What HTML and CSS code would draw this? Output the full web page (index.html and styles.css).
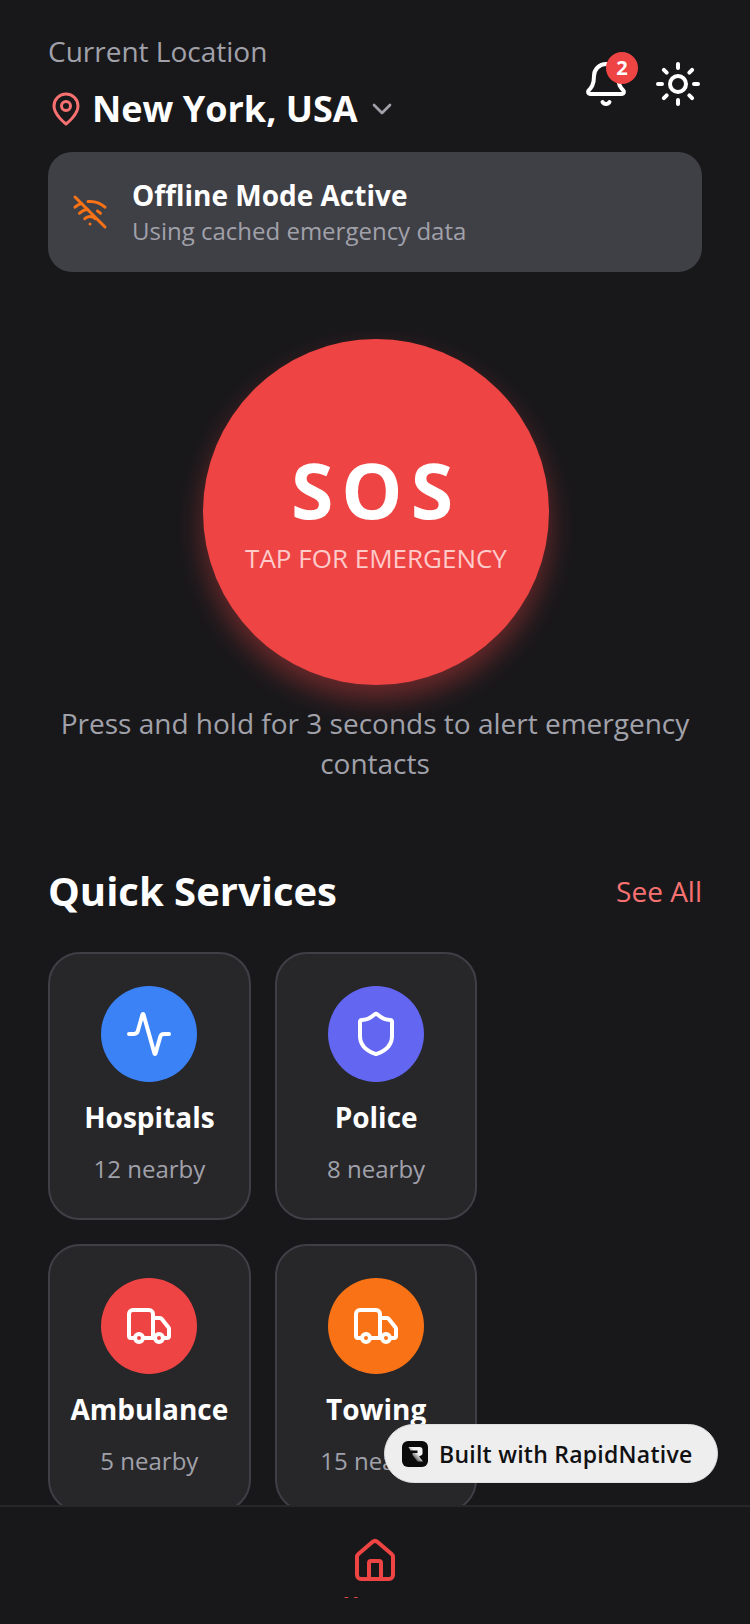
FILE: index.html
```html
<!DOCTYPE html>
<html lang="en">
<head>
  <meta charset="UTF-8">
  <meta name="viewport" content="width=device-width, initial-scale=1.0">
  <title>Emergency</title>
  <link rel="stylesheet" href="styles.css">
</head>
<body>
  <div id="app">
    <main class="content">
      <header class="top">
        <div>
          <div class="loc-label">Current Location</div>
          <div class="loc-row">
            <svg class="pin" viewBox="0 0 24 24"><path d="M20 10c0 6-8 12-8 12s-8-6-8-12a8 8 0 0 1 16 0Z"/><circle cx="12" cy="10" r="3"/></svg>
            <span class="loc-name">New York, USA</span>
            <svg class="chevron" viewBox="0 0 24 24"><path d="m6 9 6 6 6-6"/></svg>
          </div>
        </div>
        <div class="top-icons">
          <div class="bell">
            <svg class="icon48" viewBox="0 0 24 24"><path d="M10.268 21a2 2 0 0 0 3.464 0"/><path d="M3.262 15.326A1 1 0 0 0 4 17h16a1 1 0 0 0 .74-1.673C19.41 13.956 18 12.499 18 8A6 6 0 0 0 6 8c0 4.499-1.411 5.956-2.738 7.326"/></svg>
            <span class="badge">2</span>
          </div>
          <svg class="icon48" viewBox="0 0 24 24"><circle cx="12" cy="12" r="4"/><path d="M12 2v2"/><path d="M12 20v2"/><path d="m4.93 4.93 1.41 1.41"/><path d="m17.66 17.66 1.41 1.41"/><path d="M2 12h2"/><path d="M20 12h2"/><path d="m6.34 17.66-1.41 1.41"/><path d="m19.07 4.93-1.41 1.41"/></svg>
        </div>
      </header>

      <div class="offline">
        <svg class="wifi" viewBox="0 0 24 24"><path d="M12 20h.01"/><path d="M8.5 16.429a5 5 0 0 1 7 0"/><path d="M5 12.859a10 10 0 0 1 5.17-2.69"/><path d="M19 12.859a10 10 0 0 0-2.007-1.523"/><path d="M2 8.82a15 15 0 0 1 4.177-2.643"/><path d="M22 8.82a15 15 0 0 0-11.288-3.764"/><path d="m2 2 20 20"/></svg>
        <div>
          <div class="offline-title">Offline Mode Active</div>
          <div class="offline-sub">Using cached emergency data</div>
        </div>
      </div>

      <section class="sos-wrap">
        <button class="sos">
          <span class="sos-text">SOS</span>
          <span class="sos-sub">TAP FOR EMERGENCY</span>
        </button>
        <p class="sos-hint">Press and hold for 3 seconds to alert emergency contacts</p>
      </section>

      <div class="section-head">
        <h2>Quick Services</h2>
        <span class="see-all">See All</span>
      </div>

      <div class="services">
        <div class="card">
          <div class="circle blue">
            <svg class="icon48" viewBox="0 0 24 24"><path d="M22 12h-2.48a2 2 0 0 0-1.93 1.46l-2.35 8.36a.25.25 0 0 1-.48 0L9.24 2.18a.25.25 0 0 0-.48 0l-2.35 8.36A2 2 0 0 1 4.49 12H2"/></svg>
          </div>
          <div class="card-title">Hospitals</div>
          <div class="card-sub">12 nearby</div>
        </div>
        <div class="card">
          <div class="circle indigo">
            <svg class="icon48" viewBox="0 0 24 24"><path d="M20 13c0 5-3.5 7.5-7.66 8.95a1 1 0 0 1-.67-.01C7.5 20.5 4 18 4 13V6a1 1 0 0 1 1-1c2 0 4.5-1.2 6.24-2.72a1.17 1.17 0 0 1 1.52 0C14.51 3.81 17 5 19 5a1 1 0 0 1 1 1z"/></svg>
          </div>
          <div class="card-title">Police</div>
          <div class="card-sub">8 nearby</div>
        </div>
        <div class="card">
          <div class="circle red">
            <svg class="icon48" viewBox="0 0 24 24"><path d="M14 18V6a2 2 0 0 0-2-2H4a2 2 0 0 0-2 2v11a1 1 0 0 0 1 1h2"/><path d="M15 18H9"/><path d="M19 18h2a1 1 0 0 0 1-1v-3.65a1 1 0 0 0-.22-.624l-3.48-4.35A1 1 0 0 0 17.52 8H14"/><circle cx="17" cy="18" r="2"/><circle cx="7" cy="18" r="2"/></svg>
          </div>
          <div class="card-title">Ambulance</div>
          <div class="card-sub">5 nearby</div>
        </div>
        <div class="card">
          <div class="circle orange">
            <svg class="icon48" viewBox="0 0 24 24"><path d="M14 18V6a2 2 0 0 0-2-2H4a2 2 0 0 0-2 2v11a1 1 0 0 0 1 1h2"/><path d="M15 18H9"/><path d="M19 18h2a1 1 0 0 0 1-1v-3.65a1 1 0 0 0-.22-.624l-3.48-4.35A1 1 0 0 0 17.52 8H14"/><circle cx="17" cy="18" r="2"/><circle cx="7" cy="18" r="2"/></svg>
          </div>
          <div class="card-title">Towing</div>
          <div class="card-sub">15 nearby</div>
        </div>
      </div>
    </main>

    <nav class="tabbar">
      <svg class="home" viewBox="0 0 24 24"><path d="M15 21v-8a1 1 0 0 0-1-1h-4a1 1 0 0 0-1 1v8"/><path d="M3 10a2 2 0 0 1 .709-1.528l7-5.999a2 2 0 0 1 2.582 0l7 5.999A2 2 0 0 1 21 10v9a2 2 0 0 1-2 2H5a2 2 0 0 1-2-2z"/></svg>
      <div class="tab-clip"><span class="tab-label">Home</span></div>
    </nav>

    <div class="built">
      <svg class="built-logo" viewBox="0 0 26 26">
        <defs>
          <linearGradient id="logoFade" x1="0" y1="1" x2="1" y2="0">
            <stop offset="0.15" stop-color="#0b0b0c"/>
            <stop offset="0.6" stop-color="#f4f4f5"/>
          </linearGradient>
        </defs>
        <rect width="26" height="26" rx="6" fill="#0b0b0c"/>
        <path d="M6.500 6h11a3 3 0 0 1 3 3v3.500a2 2 0 0 1-1.500 2L17 15.200l4 5.300h-5.500l-5-6.500v-2h5V9.500H8.500z" fill="url(#logoFade)"/>
      </svg>
      <span>Built with RapidNative</span>
    </div>
  </div>
</body>
</html>
```

FILE: styles.css
```css
* {
  box-sizing: border-box;
}

body {
  background-color: #18181b;
  color: white;
  font-family: "Open Sans", sans-serif;
  margin: 0;
}

#app {
  position: relative;
  width: 750px;
  height: 1624px;
  display: flex;
  flex-direction: column;
  overflow: hidden;
}

svg {
  fill: none;
  stroke: currentColor;
  stroke-width: 2;
  stroke-linecap: round;
  stroke-linejoin: round;
  display: block;
}

.icon48 {
  width: 48px;
  height: 48px;
}

.content {
  flex: 1;
  min-height: 0;
  overflow: hidden;
  padding: 31px 48px 0;
}

/* location + bell/theme */
.top {
  display: flex;
  justify-content: space-between;
  align-items: center;
}

.loc-label {
  font-size: 28px;
  line-height: 40px;
  color: #a1a1aa;
}

.loc-row {
  display: flex;
  align-items: center;
  margin-top: 14px;
}

.pin {
  width: 36px;
  height: 36px;
  color: #f87171;
  margin-right: 8px;
}

.loc-name {
  font-size: 36px;
  line-height: 48px;
  font-weight: 700;
}

.chevron {
  width: 32px;
  height: 32px;
  color: #a1a1aa;
  margin-left: 8px;
}

.top-icons {
  display: flex;
  align-items: center;
  gap: 24px;
  margin-top: 3px;
}

.bell {
  position: relative;
}

.badge {
  position: absolute;
  top: -8px;
  right: -8px;
  width: 32px;
  height: 32px;
  border-radius: 50%;
  background-color: #ef4444;
  font-size: 20px;
  font-weight: 700;
  line-height: 32px;
  text-align: center;
}

/* offline banner */
.offline {
  display: flex;
  align-items: center;
  gap: 24px;
  margin-top: 19px;
  height: 120px;
  padding: 0 24px;
  background-color: #3f3f46;
  border-radius: 24px;
}

.wifi {
  width: 36px;
  height: 36px;
  color: #f97316;
}

.offline-title {
  font-size: 28px;
  line-height: 36px;
  font-weight: 700;
}

.offline-sub {
  margin-top: 2px;
  font-size: 24px;
  line-height: 32px;
  color: #a1a1aa;
}

/* sos button */
.sos-wrap {
  display: flex;
  flex-direction: column;
  align-items: center;
  margin-top: 67px;
}

.sos {
  width: 346px;
  height: 346px;
  margin-left: 2px;
  border: none;
  border-radius: 50%;
  background-color: #ef4444;
  color: white;
  font-family: inherit;
  display: flex;
  flex-direction: column;
  align-items: center;
  justify-content: center;
  box-shadow: 0 14px 28px rgba(239, 68, 68, 0.4);
}

.sos-text {
  font-size: 77px;
  line-height: 80px;
  font-weight: 700;
  letter-spacing: 8px;
}

.sos-sub {
  font-size: 26px;
  line-height: 32px;
  margin-top: 12px;
  color: #fecaca;
}

.sos-hint {
  margin: 18px 0 0;
  font-size: 28px;
  line-height: 40px;
  color: #a1a1aa;
  text-align: center;
}

/* quick services */
.section-head {
  display: flex;
  justify-content: space-between;
  align-items: center;
  margin-top: 84px;
}

.section-head h2 {
  margin: 0;
  font-size: 40px;
  line-height: 48px;
  font-weight: 700;
}

.see-all {
  font-size: 28px;
  color: #f87171;
}

.services {
  display: flex;
  flex-wrap: wrap;
  gap: 24px;
  margin-top: 37px;
}

.card {
  width: 31%;
  padding: 32px 0 33px;
  display: flex;
  flex-direction: column;
  align-items: center;
  background-color: #27272a;
  border: 2px solid #3f3f46;
  border-radius: 32px;
}

.circle {
  width: 96px;
  height: 96px;
  border-radius: 50%;
  display: flex;
  align-items: center;
  justify-content: center;
}

.blue { background-color: #3b82f6; }
.indigo { background-color: #6366f1; }
.red { background-color: #ef4444; }
.orange { background-color: #f97316; }

.card-title {
  margin-top: 15px;
  font-size: 28px;
  line-height: 40px;
  font-weight: 700;
}

.card-sub {
  margin-top: 16px;
  font-size: 24px;
  line-height: 32px;
  color: #a1a1aa;
}

/* bottom tab */
.tabbar {
  flex: none;
  height: 119px;
  padding-top: 30px;
  display: flex;
  flex-direction: column;
  align-items: center;
  background-color: #18181b;
  border-top: 2px solid #27272a;
}

.home {
  width: 48px;
  height: 48px;
  color: #ef4444;
}

.tab-clip {
  height: 13px;
  overflow: hidden;
}

.tab-label {
  display: block;
  margin-top: 2px;
  font-size: 22px;
  line-height: 32px;
  font-weight: 700;
  color: #ef4444;
}

/* floating pill */
.built {
  position: absolute;
  top: 1424px;
  left: 384px;
  height: 59px;
  padding: 0 24px 0 17px;
  display: flex;
  align-items: center;
  gap: 11px;
  background-color: #eeeeef;
  border: 1px solid #e0e0e2;
  border-radius: 30px;
  color: #111113;
  font-size: 23px;
  font-weight: 600;
  letter-spacing: 0.25px;
}

.built-logo {
  width: 26px;
  height: 26px;
  stroke: none;
}
```
